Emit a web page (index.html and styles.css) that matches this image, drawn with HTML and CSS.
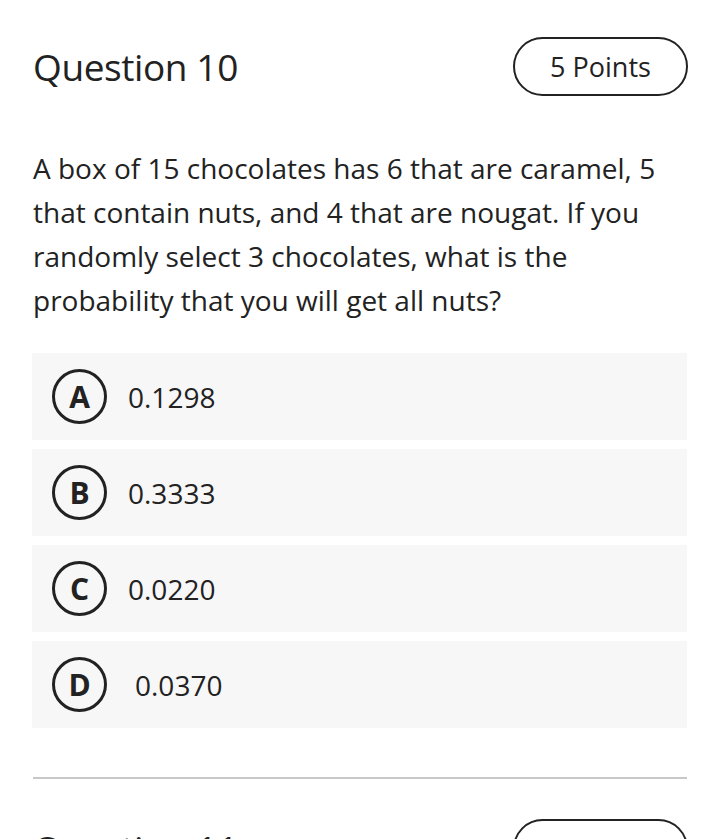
FILE: index.html
```html
<!DOCTYPE html>
<html>
<head>
<meta charset="utf-8">
<link rel="stylesheet" href="styles.css">
</head>
<body>
<div class="page">
  <section class="question">
    <header class="q-head">
      <h2 class="q-title">Question 10</h2>
      <span class="pill">5 Points</span>
    </header>
    <p class="q-text">A box of 15 chocolates has 6 that are caramel, 5 that contain nuts, and 4 that are nougat. If you randomly select 3 chocolates, what is the probability that you will get all nuts?</p>
    <ul class="options">
      <li class="option"><span class="badge">A</span><span class="opt-text">0.1298</span></li>
      <li class="option"><span class="badge">B</span><span class="opt-text">0.3333</span></li>
      <li class="option"><span class="badge">C</span><span class="opt-text">0.0220</span></li>
      <li class="option"><span class="badge">D</span><span class="opt-text opt-text-wide">0.0370</span></li>
    </ul>
  </section>
  <hr class="divider">
  <section class="question">
    <header class="q-head">
      <h2 class="q-title">Question 11</h2>
      <span class="pill">5 Points</span>
    </header>
  </section>
</div>
</body>
</html>
```

FILE: styles.css
```css
html, body {
  margin: 0;
  padding: 0;
  background: #ffffff;
}
body {
  font-family: "Open Sans", "Liberation Sans", sans-serif;
  color: #222222;
  overflow: hidden;
  height: 839px;
}
.page {
  padding: 37px 33px 0 33px;
}
.q-head {
  display: flex;
  justify-content: space-between;
  align-items: center;
}
.q-title {
  margin: 0;
  font-size: 37px;
  font-weight: 500;
  letter-spacing: -0.4px;
  color: #222;
}
.pill {
  box-sizing: border-box;
  width: 175px;
  height: 59px;
  border: 2px solid #222;
  border-radius: 30px;
  display: flex;
  align-items: center;
  justify-content: center;
  font-size: 27px;
  font-weight: 500;
  margin-right: -1px;
}
.q-text {
  margin: 50px 0 0 0;
  font-size: 28px;
  line-height: 44px;
  color: #222;
}
.options {
  list-style: none;
  margin: 31px 0 0 -1px;
  padding: 0;
  display: flex;
  flex-direction: column;
  gap: 9px;
}
.option {
  height: 87px;
  background: #f7f7f7;
  display: flex;
  align-items: center;
  padding-left: 20px;
}
.badge {
  box-sizing: border-box;
  width: 55px;
  height: 55px;
  border: 3px solid #222;
  border-radius: 50%;
  display: flex;
  align-items: center;
  justify-content: center;
  font-size: 30px;
  font-weight: 700;
  color: #222;
}
.opt-text {
  margin-left: 21px;
  font-size: 28px;
  color: #222;
}
.opt-text-wide {
  margin-left: 28px;
}
.divider {
  margin: 49px 0 0 0;
  border: 0;
  height: 2px;
  background: #c8c8c8;
}
.question + .divider + .question .q-head {
  margin-top: 40px;
}
```
